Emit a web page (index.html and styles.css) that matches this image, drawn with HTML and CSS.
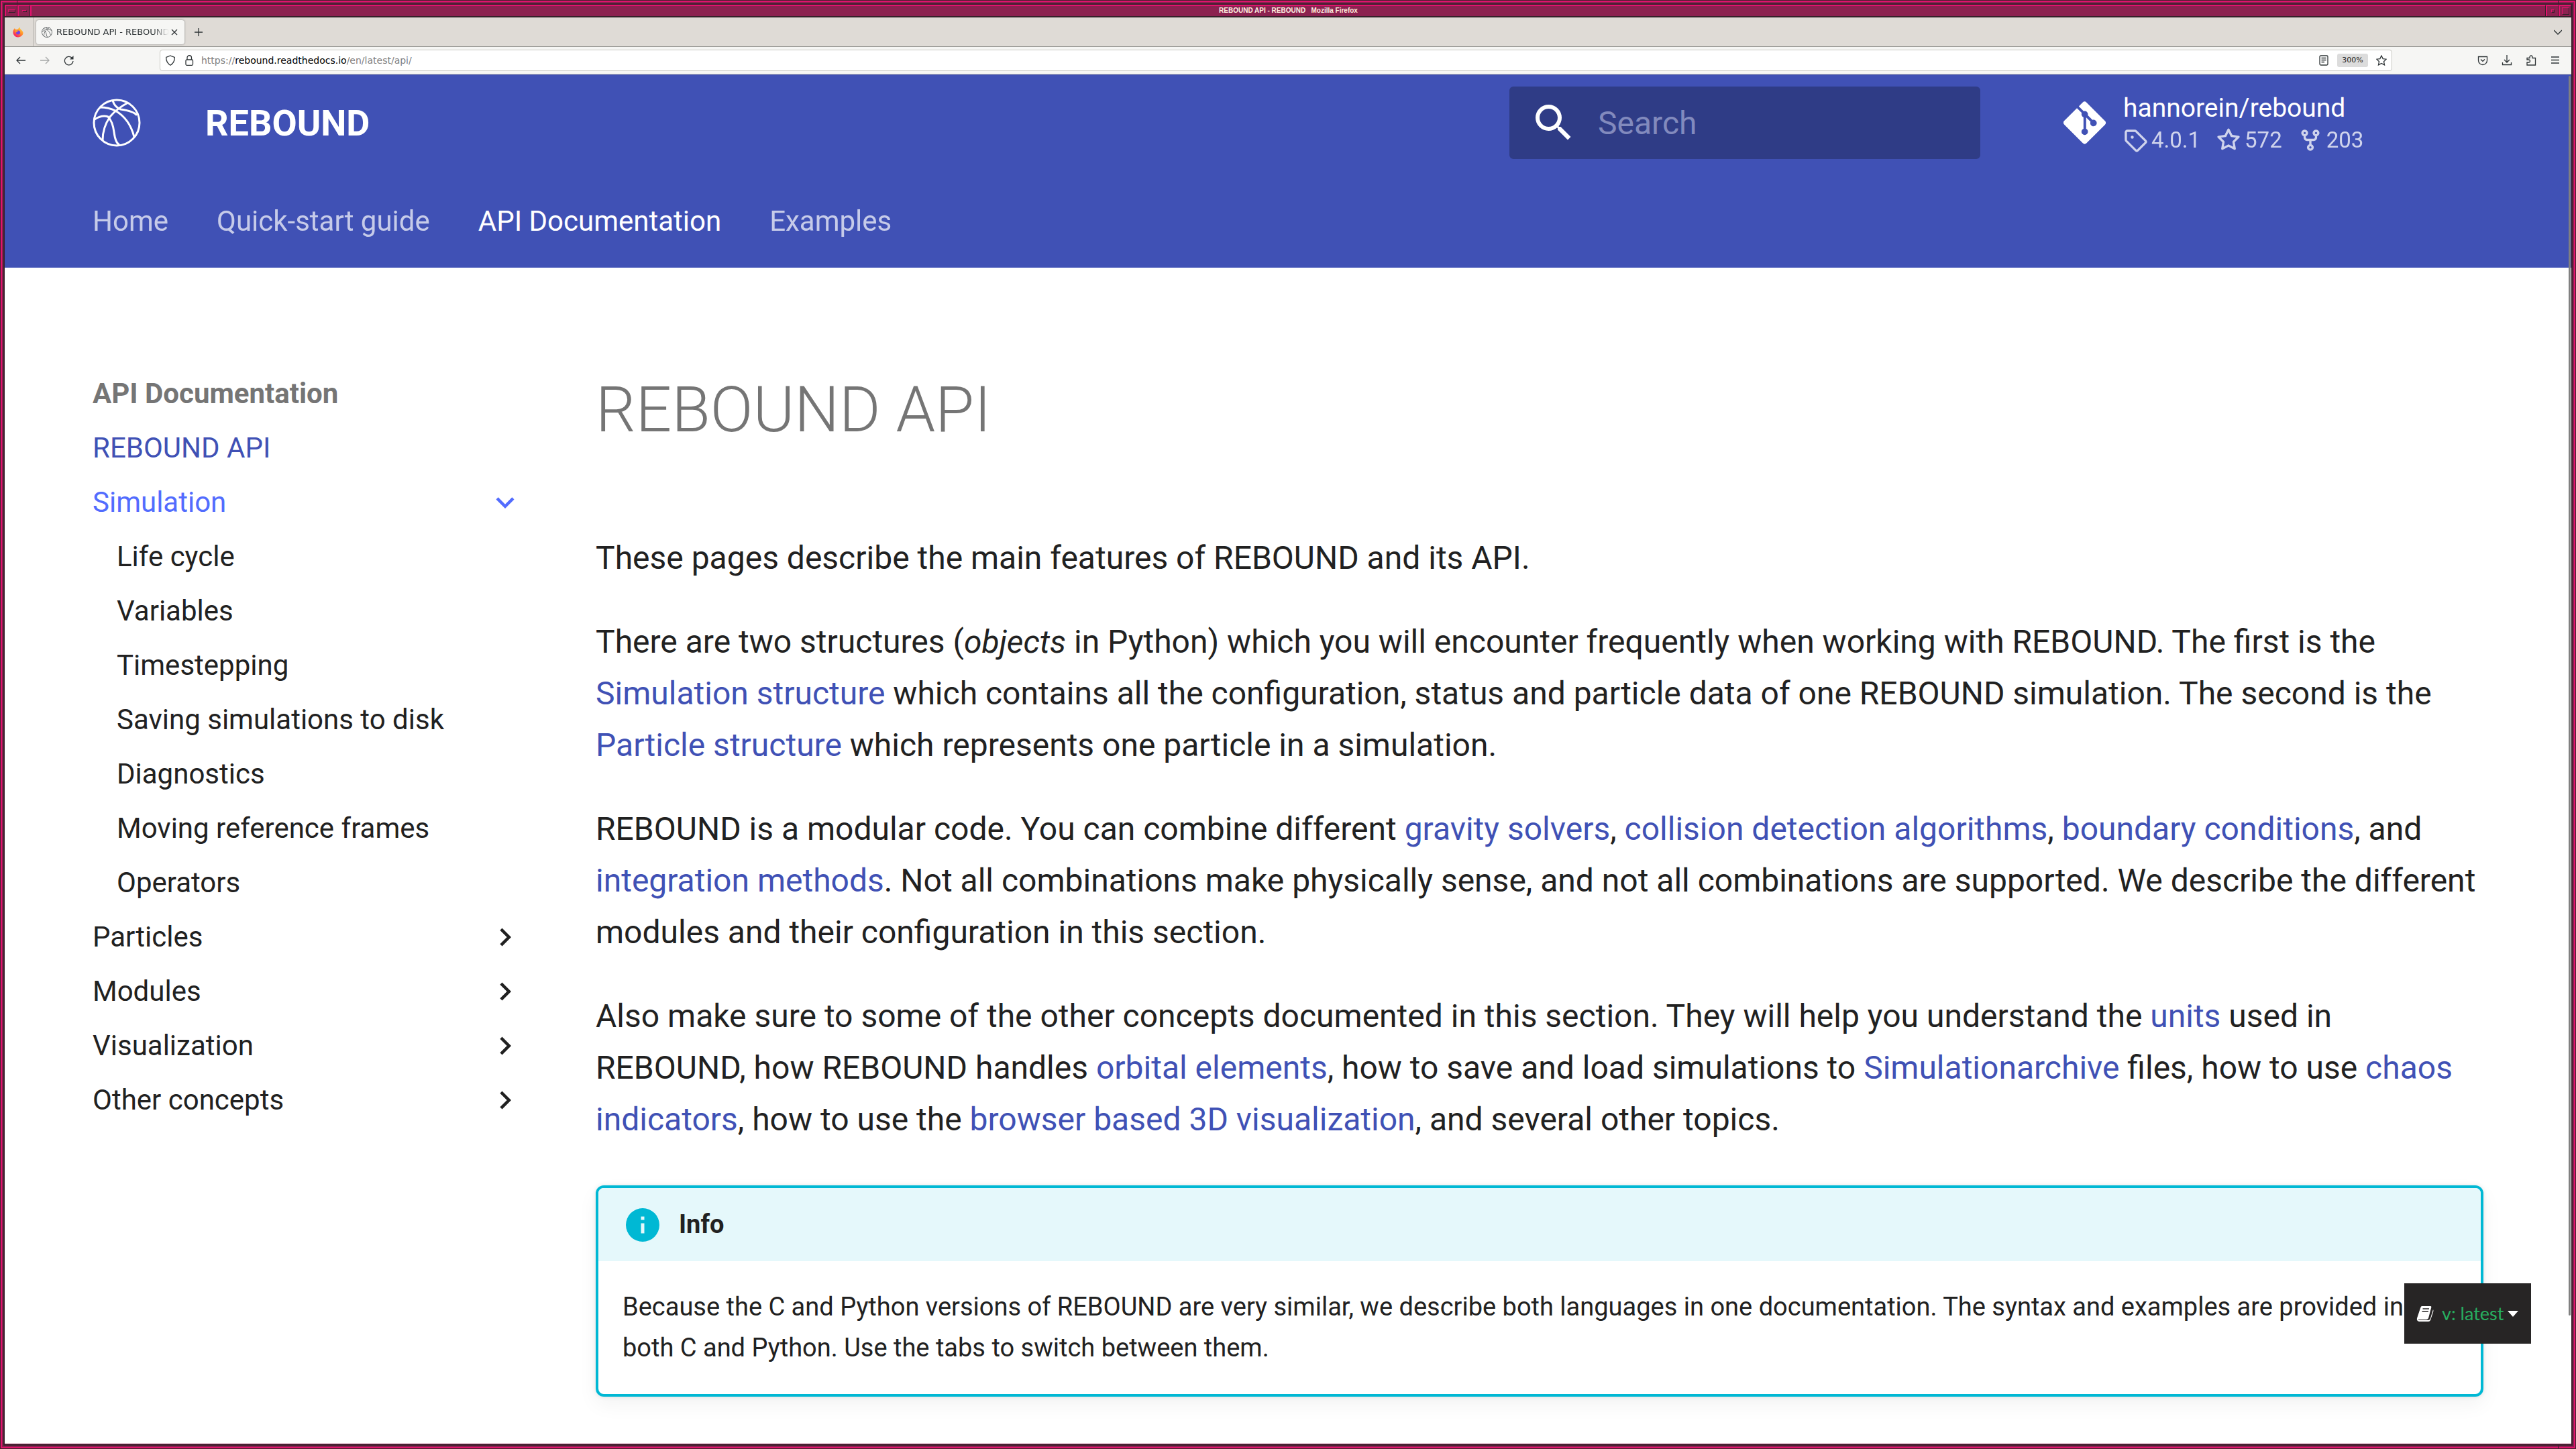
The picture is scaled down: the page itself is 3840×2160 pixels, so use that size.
FILE: index.html
```html
<!DOCTYPE html>
<html lang="en">
<head>
<meta charset="utf-8">
<title>REBOUND API - REBOUND</title>
<link rel="stylesheet" href="styles.css">
</head>
<body>
<svg class="defs" aria-hidden="true">
  <symbol id="ball" viewBox="0 0 72 72">
    <g fill="none" stroke="currentColor" stroke-width="3">
      <circle cx="36" cy="36" r="34"/>
      <path d="M30 3Q33 13 42 16Q62 19 66 25"/>
      <path d="M53 6Q37 14 26 27Q15 43 15 62"/>
      <path d="M11 13Q24 13 34 18Q55 30 62 57"/>
      <path d="M3 31Q14 24 23 27Q30 34 32 50Q34 66 40 69"/>
    </g>
  </symbol>
</svg>
<div class="window">
  <div class="titlebar">
    <button class="wm wm-menu" aria-label="Window menu"><i></i></button>
    <button class="wm wm-min" aria-label="Minimize"><i></i></button>
    <div class="wm-title">REBOUND API - REBOUND &nbsp; Mozilla Firefox</div>
    <button class="wm wm-dot" aria-label="Restore"><i></i></button>
    <button class="wm wm-max" aria-label="Maximize"><i></i></button>
  </div>
  <div class="tabstrip">
    <button class="fox" aria-label="Firefox View">
      <svg viewBox="0 0 16 16"><defs><linearGradient id="fx" x1="1" y1="0" x2=".3" y2="1"><stop offset="0" stop-color="#fff44f"/><stop offset=".55" stop-color="#ff8a2b"/><stop offset="1" stop-color="#f5156c"/></linearGradient></defs><path d="M11 0Q10 2 12 4Q16 7 15.500 10A7.600 7 0 0 1 .5 9Q0 5 3 2Q3 4 5 4Q8 4 9 2Z" fill="url(#fx)"/><circle cx="8" cy="8.500" r="3" fill="#7542e5"/><path d="M3 4Q7 4 8 7Q5 7 5 9Q3 7 3 4Z" fill="#ff9a2b"/></svg>
    </button>
    <div class="tab">
      <svg class="tab-ball"><use href="#ball"/></svg>
      <span class="tab-text">REBOUND API - REBOUND</span>
      <button class="ib close" aria-label="Close tab"><svg viewBox="0 0 10 10"><path d="M1 1L9 9M9 1L1 9"/></svg></button>
    </div>
    <button class="ib plus" aria-label="New tab"><svg viewBox="0 0 12 12"><path d="M6 0V12M0 6H12"/></svg></button>
    <button class="ib alltabs" aria-label="List all tabs"><svg viewBox="0 0 12 12"><path d="M0 3L6 9L12 3"/></svg></button>
  </div>
  <div class="toolbar">
    <div class="navbtns">
      <button class="ib" aria-label="Back"><svg viewBox="0 0 16 16"><path d="M15 8H2M7 3L2 8L7 13"/></svg></button>
      <button class="ib off" aria-label="Forward"><svg viewBox="0 0 16 16"><path d="M1 8H14M9 3L14 8L9 13"/></svg></button>
      <button class="ib" aria-label="Reload"><svg viewBox="0 0 16 16"><path d="M14 9A6.300 6.300 0 1 1 12 4"/><path d="M14.500 1V6.500H9Z" fill="#2e3436" stroke="none"/></svg></button>
    </div>
    <div class="urlbar">
      <svg viewBox="0 0 16 16"><path d="M8 1L14.300 3.500Q14.500 11 8 15.300Q1.500 11 1.700 3.500Z"/></svg>
      <svg class="lock" viewBox="0 0 16 16"><rect x="3" y="7" width="10.500" height="8.300" rx="1.500"/><path d="M5 7V4A3.200 3.200 0 0 1 11.500 4V7"/></svg>
      <div class="url" aria-label="Address">https://<b>rebound.readthedocs.io</b>/en/latest/api/</div>
      <button class="ib" aria-label="Reader view"><svg viewBox="0 0 16 16"><rect x="2" y="1" width="12" height="14" rx="1.500"/><path d="M4.500 4.500H11.500M4.500 7.500H11.500M4.500 10.500H9"/></svg></button>
      <button class="zoom">300%</button>
      <button class="ib" aria-label="Bookmark"><svg viewBox="0 0 16 16"><path d="M8 1L10.200 5.600L15.200 6.200L11.500 9.700L12.500 14.900L8 12.400L3.500 14.900L4.500 9.700L.8 6.200L5.800 5.600Z"/></svg></button>
    </div>
    <div class="tools">
      <button class="ib" aria-label="Pocket"><svg viewBox="0 0 16 16"><path d="M1.500 2.500H14.500V8A6.500 6.500 0 0 1 1.500 8Z"/><path d="M5 6.500L8 9.300L11 6.500"/></svg></button>
      <button class="ib" aria-label="Downloads"><svg viewBox="0 0 16 16"><path d="M8 0V11M4 7L8 11L12 7M1.500 11V14.500H14.500V11"/></svg></button>
      <button class="ib" aria-label="Extensions"><svg viewBox="0 0 16 16"><path d="M2 15V11H4.500A2 2 0 0 0 4.500 7H2V4.500H6V3A2 2 0 0 1 10 3V4.500H14.500V15Z"/></svg></button>
      <button class="ib" aria-label="Menu"><svg viewBox="0 0 16 16"><path d="M2 3H14M2 7.500H14M2 12H14"/></svg></button>
    </div>
  </div>
  <div class="page">
    <header class="header">
      <div class="bar">
        <a class="logo" href="#" aria-label="REBOUND"><svg><use href="#ball"/></svg></a>
        <a class="site" href="#">REBOUND</a>
        <label class="search">
          <svg viewBox="0 0 24 24"><path fill="#fff" d="M9.500 3A6.500 6.500 0 0 1 16 9.500c0 1.610-.59 3.090-1.560 4.230l.27.270h.79l5 5-1.500 1.500-5-5v-.79l-.27-.27A6.516 6.516 0 0 1 9.500 16 6.500 6.500 0 0 1 3 9.500 6.500 6.500 0 0 1 9.500 3m0 2C7 5 5 7 5 9.500S7 14 9.500 14 14 12 14 9.500 12 5 9.500 5Z"/></svg>
          <input type="text" placeholder="Search" aria-label="Search">
        </label>
        <a class="repo" href="#">
          <svg class="git" viewBox="0 0 448 512"><path fill="#fff" d="M439.550 236.050 244 40.450a28.870 28.870 0 0 0-40.810 0l-40.660 40.630 51.520 51.520c27.060-9.140 52.680 16.770 43.390 43.680l49.660 49.660c34.230-11.800 61.180 31 35.470 56.690-26.490 26.490-70.210-2.870-56-37.340L240.220 199v121.850c25.300 12.540 22.260 41.850 9.080 55a34.340 34.340 0 0 1-48.550 0c-17.570-17.600-11.070-46.910 11.250-56v-123c-20.800-8.510-24.600-30.740-18.640-45L142.570 101 8.450 235.140a28.860 28.860 0 0 0 0 40.810l195.610 195.600a28.860 28.860 0 0 0 40.800 0l194.690-194.690a28.860 28.860 0 0 0 0-40.810z"/></svg>
          <span class="repo-text">
            <span class="repo-name">hannorein/rebound</span>
            <span class="facts">
              <span><svg viewBox="0 0 16 16"><path d="M1 7.775V2.750C1 1.784 1.784 1 2.750 1h5.025c.464 0 .91.184 1.238.513l6.250 6.250a1.750 1.750 0 0 1 0 2.474l-5.026 5.026a1.750 1.750 0 0 1-2.474 0l-6.250-6.250A1.752 1.752 0 0 1 1 7.775Zm1.500 0c0 .066.026.130.073.177l6.250 6.250a.25.25 0 0 0 .354 0l5.025-5.025a.25.25 0 0 0 0-.354l-6.250-6.250a.25.25 0 0 0-.177-.073H2.750a.25.25 0 0 0-.25.25ZM6 5a1 1 0 1 1 0 2 1 1 0 0 1 0-2Z"/></svg>4.0.1</span>
              <span><svg viewBox="0 0 16 16"><path d="M8 .25a.75.75 0 0 1 .673.418l1.882 3.815 4.210.612a.75.75 0 0 1 .416 1.279l-3.046 2.970.719 4.192a.751.751 0 0 1-1.088.791L8 12.347l-3.766 1.980a.75.75 0 0 1-1.088-.79l.72-4.194L.818 6.374a.75.75 0 0 1 .416-1.280l4.210-.611L7.327.668A.75.75 0 0 1 8 .25Zm0 2.445L6.615 5.500a.75.75 0 0 1-.564.410l-3.097.450 2.240 2.184a.75.75 0 0 1 .216.664l-.528 3.084 2.769-1.456a.75.75 0 0 1 .698 0l2.770 1.456-.53-3.084a.75.75 0 0 1 .216-.664l2.240-2.183-3.096-.450a.75.75 0 0 1-.564-.410L8 2.694Z"/></svg>572</span>
              <span><svg viewBox="0 0 16 16"><path d="M5 5.372v.878c0 .414.336.75.750.750h4.500a.75.75 0 0 0 .75-.75v-.878a2.250 2.250 0 1 1 1.500 0v.878a2.250 2.250 0 0 1-2.250 2.250h-1.500v2.128a2.251 2.251 0 1 1-1.500 0V8.500h-1.500A2.250 2.250 0 0 1 3.500 6.250v-.878a2.250 2.250 0 1 1 1.500 0ZM5 3.250a.75.75 0 1 0-1.500 0 .75.75 0 0 0 1.500 0Zm6.750.75a.75.75 0 1 0 0-1.500.75.75 0 0 0 0 1.500Zm-3 8.750a.75.75 0 1 0-1.500 0 .75.75 0 0 0 1.500 0Z"/></svg>203</span>
            </span>
          </span>
        </a>
      </div>
      <nav class="tabs" aria-label="Tabs">
        <a href="#">Home</a><a href="#">Quick-start guide</a><a class="on" href="#">API Documentation</a><a href="#">Examples</a>
      </nav>
    </header>
    <div class="main">
      <nav class="side" aria-label="API Documentation">
        <div class="side-title">API Documentation</div>
        <a class="current" href="#">REBOUND API</a>
        <a class="open" href="#">Simulation<svg viewBox="0 0 24 24"><path d="M7.410 8.580 12 13.170l4.590-4.590L18 10l-6 6-6-6z"/></svg></a>
        <div class="sub">
          <a href="#">Life cycle</a>
          <a href="#">Variables</a>
          <a href="#">Timestepping</a>
          <a href="#">Saving simulations to disk</a>
          <a href="#">Diagnostics</a>
          <a href="#">Moving reference frames</a>
          <a href="#">Operators</a>
        </div>
        <a href="#">Particles<svg viewBox="0 0 24 24"><path d="M8.590 16.580 13.170 12 8.590 7.410 10 6l6 6-6 6z"/></svg></a>
        <a href="#">Modules<svg viewBox="0 0 24 24"><path d="M8.590 16.580 13.170 12 8.590 7.410 10 6l6 6-6 6z"/></svg></a>
        <a href="#">Visualization<svg viewBox="0 0 24 24"><path d="M8.590 16.580 13.170 12 8.590 7.410 10 6l6 6-6 6z"/></svg></a>
        <a href="#">Other concepts<svg viewBox="0 0 24 24"><path d="M8.590 16.580 13.170 12 8.590 7.410 10 6l6 6-6 6z"/></svg></a>
      </nav>
      <article class="content">
        <h1>REBOUND API</h1>
        <p>These pages describe the main features of REBOUND and its API.</p>
        <p>There are two structures (<em>objects</em> in Python) which you will encounter frequently when working with REBOUND. The first is the <a href="#">Simulation structure</a> which contains all the configuration, status and particle data of one REBOUND simulation. The second is the <a href="#">Particle structure</a> which represents one particle in a simulation.</p>
        <p>REBOUND is a modular code. You can combine different <a href="#">gravity solvers</a>, <a href="#">collision detection algorithms</a>, <a href="#">boundary conditions</a>, and <a href="#">integration methods</a>. Not all combinations make physically sense, and not all combinations are supported. We describe the different modules and their configuration in this section.</p>
        <p>Also make sure to some of the other concepts documented in this section. They will help you understand the <a href="#">units</a> used in REBOUND, how REBOUND handles <a href="#">orbital elements</a>, how to save and load simulations to <a href="#">Simulationarchive</a> files, how to use <a href="#">chaos indicators</a>, how to use the <a href="#">browser based 3D visualization</a>, and several other topics.</p>
        <section class="info">
          <div class="info-title"><svg viewBox="0 0 24 24"><path fill="#00b8d4" d="M13 9h-2V7h2m0 10h-2v-6h2m-1-9A10 10 0 0 0 2 12a10 10 0 0 0 10 10 10 10 0 0 0 10-10A10 10 0 0 0 12 2Z"/></svg>Info</div>
          <p>Because the C and Python versions of REBOUND are very similar, we describe both languages in one documentation. The syntax and examples are provided in both C and Python. Use the tabs to switch between them.</p>
        </section>
      </article>
    </div>
    <div class="scroll"></div>
    <button class="version">
      <svg class="book" viewBox="0 0 26 24"><path fill="#fff" d="M8 1H21Q23 1 22 4L18 19Q17 21 15 21H4Q2 21 3 22H17Q20 22 21 19L25 6Q26 8 25 10L21 22Q20 24 18 24H4Q0 23 1 19L6 4Q7 1 8 1Z"/><path stroke="#272525" stroke-width="1.300" d="M9.500 5H19M8.500 9H18"/></svg>
      <span>v: latest</span>
      <svg class="caret" viewBox="0 0 16 9"><path fill="#fff" d="M0 0H16L8 9Z"/></svg>
    </button>
  </div>
  <i class="notch tl"></i><i class="notch tr"></i><i class="notch br"></i>
</div>
</body>
</html>
```
FILE: styles.css
```css
* { box-sizing: border-box; }
body { margin: 0; font-family: Roboto, sans-serif; color: #212121; background: #fff; }
a { color: inherit; text-decoration: none; }
button { border: 0; padding: 0; background: none; font: inherit; color: inherit; }
svg { display: block; flex: none; }
.defs { position: absolute; width: 0; height: 0; }

/* window frame */
.window {
  position: relative; height: 100vh; display: flex; flex-direction: column;
  padding: 7px 7px 8px;
  background: #8c2150;
  box-shadow: inset 0 0 0 1px #40202c, inset 0 0 0 3px #e2126d, inset 0 0 0 5px #8c2150, inset 0 0 0 7px #35202a;
}
.titlebar { display: flex; height: 19px; flex: none; border-bottom: 2px solid #35202a; }
.wm, .wm-title { border-top: 2px solid #e2126d; border-left: 2px solid #e2126d; border-right: 1px solid #35202a; }
.wm { width: 19px; display: flex; align-items: center; justify-content: center; }
.wm i { display: block; border: 1px solid #35202a; border-top-color: #e2126d; border-left-color: #e2126d; }
.wm-menu i { width: 11px; height: 5px; }
.wm-min i { width: 7px; height: 3px; }
.wm-dot i { width: 5px; height: 5px; }
.wm-max i { width: 11px; height: 11px; }
.wm-title { flex: 1; text-align: center; font: bold 10px/14px "Liberation Sans", sans-serif; color: #fff0e0; }
.notch { position: absolute; background: #35202a; }
.tl { left: 25px; top: 1px; width: 1px; height: 5px; }
.tr { right: 26px; top: 1px; width: 1px; height: 5px; }
.br { right: 26px; bottom: 1px; width: 1px; height: 5px; }

/* browser chrome */
.tabstrip { display: flex; align-items: center; flex: none; height: 44px; background: #dfdbd6; border-bottom: 1px solid #949490; }
.fox { width: 43px; height: 43px; border-right: 1px solid #b8b5b0; display: flex; align-items: center; padding-left: 12px; }
.fox svg { width: 16px; height: 16px; }
.tab { width: 221px; height: 36px; margin-left: 4px; display: flex; align-items: center; padding: 0 10px 0 8px; border-radius: 4px; background: #f6f6f4; box-shadow: 0 0 3px #888; }
.tab-ball { width: 16px; height: 16px; margin-right: 6px; color: #2e3436; }
.tab-text { flex: 1; overflow: hidden; white-space: nowrap; font: 13px/16px "DejaVu Sans", sans-serif; color: #2e3436; -webkit-mask-image: linear-gradient(to right, #000 85%, transparent); mask-image: linear-gradient(to right, #000 85%, transparent); }
.ib { display: flex; }
.ib svg, .urlbar > svg { width: 16px; height: 16px; fill: none; stroke: #2e3436; stroke-width: 1.3; }
.off { opacity: .4; }
.close { margin-left: 3px; }
.close svg { width: 10px; height: 10px; }
.plus { margin-left: 15px; }
.plus svg { width: 12px; height: 12px; }
.alltabs { margin-left: auto; margin-right: 14px; }
.alltabs svg { width: 12px; height: 12px; }
.toolbar { display: flex; align-items: center; flex: none; height: 41px; background: #f6f6f4; border-bottom: 1px solid #ccc9bb; }
.navbtns { display: flex; gap: 20px; width: 231px; padding-left: 16px; }
.urlbar { flex: 1; height: 32px; display: flex; align-items: center; padding: 0 7px; border: 1px solid #c8c8c2; border-radius: 4px; background: #fff; }
.lock { margin: 0 10px 0 12px; }
.url { flex: 1; font: 14px/16px "DejaVu Sans", sans-serif; color: #808080; }
.url b { font-weight: 400; color: #000; }
.zoom { width: 46px; height: 20px; margin: 0 12px; border-radius: 3px; background: #dcdcdc; font: 11px/20px "DejaVu Sans", sans-serif; color: #222; }
.tools { display: flex; gap: 20px; padding: 0 16px 0 127px; }

/* page header */
.page { position: relative; flex: 1; min-height: 0; background: #fff; overflow: hidden; }
.header { height: 288px; padding: 0 83px; background: #4051b5; color: #fff; }
.bar { display: flex; align-items: center; height: 144px; padding-left: 48px; }
.logo svg { width: 72px; height: 72px; }
.site { margin-left: 96px; padding-top: 2px; font-weight: 700; font-size: 54px; line-height: 72px; flex: 1; }
.search { display: flex; align-items: center; width: 702px; height: 108px; padding-left: 30px; border-radius: 6px; background: #2f3c86; }
.search svg { width: 72px; height: 72px; }
.search input { flex: 1; min-width: 0; margin-left: 30px; border: 0; padding: 2px 0 0; background: none; font: 48px/60px Roboto, sans-serif; color: #fff; }
.search input::placeholder { color: #828abd; opacity: 1; }
.repo { display: flex; align-items: center; width: 702px; margin-left: 60px; margin-right: 36px; padding-left: 64px; }
.git { width: 63px; height: 72px; }
.repo-text { margin-left: 26px; padding-top: 4px; }
.repo-name { display: block; font-size: 39px; line-height: 48px; }
.facts { display: flex; gap: 24px; font-size: 33px; line-height: 48px; opacity: .75; }
.facts span { display: flex; align-items: center; }
.facts svg { width: 36px; height: 36px; margin-right: 6px; fill: #fff; }
.tabs { display: flex; gap: 72px; height: 144px; padding: 48px 0 0 48px; font-size: 42px; line-height: 54px; }
.tabs a { opacity: .7; }
.tabs .on { opacity: 1; }

/* body columns */
.main { display: flex; padding: 150px 131px 0; }
.side { width: 642px; flex: none; margin-right: 108px; padding-top: 11px; font-size: 42px; line-height: 54px; }
.side-title, .side a { display: flex; justify-content: space-between; align-items: center; height: 54px; margin-bottom: 27px; }
.side-title { color: #757575; font-weight: 700; }
.side svg { width: 54px; height: 54px; fill: currentColor; }
.side .current { color: #4051b5; }
.side .open { color: #526cfe; }
.sub { padding-left: 36px; }
.content { flex: 1; min-width: 0; font-size: 48px; line-height: 77px; }
h1 { margin: 0 0 119px; font-weight: 300; font-size: 94px; line-height: 125px; color: #757575; }
.content p { margin: 0 0 48px; }
.content a { color: #4051b5; }
.info { margin-top: 60px; border: 4px solid #00b8d4; border-radius: 12px; font-size: 38px; line-height: 61px; box-shadow: 0 12px 30px rgba(0,0,0,.05), 0 0 6px rgba(0,0,0,.1); overflow: hidden; }
.info-title { display: flex; align-items: center; gap: 24px; height: 109px; padding-left: 36px; background: #e5f8fb; font-weight: 700; }
.info-title svg { width: 60px; height: 60px; }
.content .info p { margin: 0; padding: 38px 36px; }

/* overlays */
.scroll { position: absolute; right: 1px; top: 2px; width: 3px; bottom: 191px; border-radius: 2px; background: #808080; }
.version { position: absolute; right: 60px; bottom: 149px; width: 189px; height: 90px; padding: 0 18px; display: flex; align-items: center; background: #272525; color: #27ae60; font: 27px/36px Lato, sans-serif; white-space: nowrap; }
.book { width: 26px; height: 24px; margin-right: 12px; }
.caret { width: 16px; height: 9px; margin-left: 6px; }
```
